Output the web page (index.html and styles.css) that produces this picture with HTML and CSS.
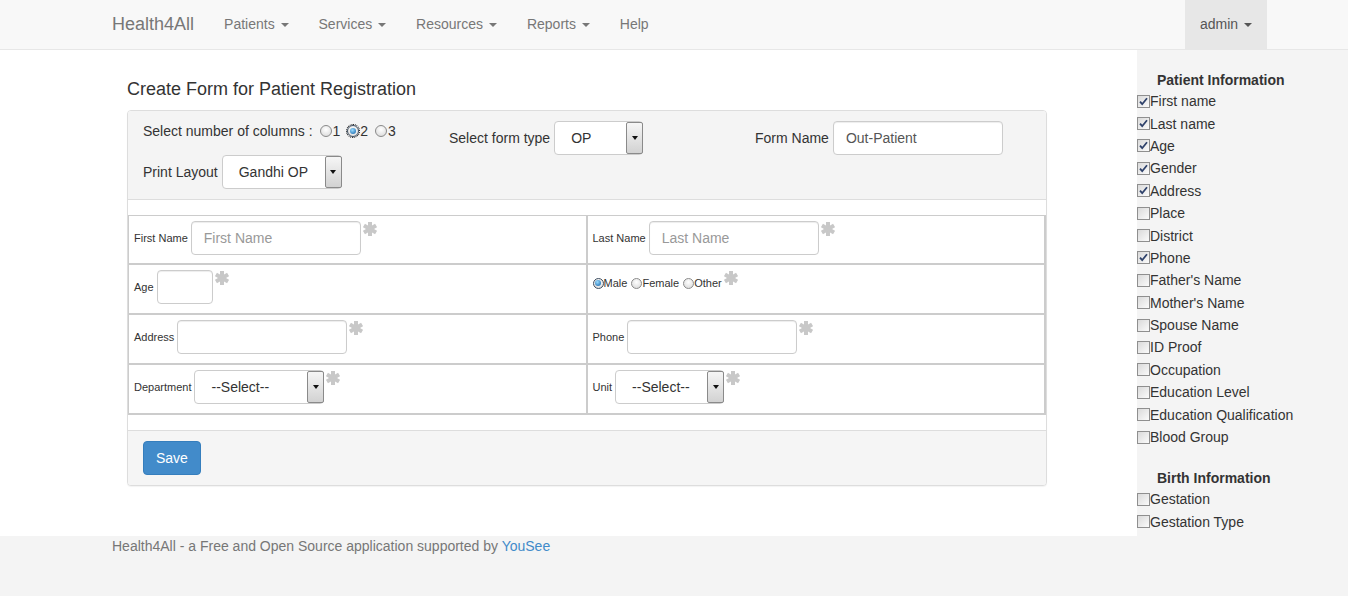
FILE: index.html
```html
<!DOCTYPE html>
<html>
<head>
<meta charset="utf-8">
<title>Health4All</title>
<link rel="stylesheet" href="styles.css">
</head>
<body>
<nav class="navbar">
  <a class="brand" href="#">Health4All</a>
  <ul class="nav">
    <li><a href="#">Patients <span class="caret"></span></a></li>
    <li><a href="#">Services <span class="caret"></span></a></li>
    <li><a href="#">Resources <span class="caret"></span></a></li>
    <li><a href="#">Reports <span class="caret"></span></a></li>
    <li><a href="#">Help</a></li>
  </ul>
  <ul class="nav nav-right">
    <li class="open"><a href="#">admin <span class="caret"></span></a></li>
  </ul>
</nav>

<div class="page">
  <main class="main">
    <h3 class="title">Create Form for Patient Registration</h3>
    <div class="panel">
      <div class="panel-heading">
        <div class="col">
          <div class="cols-line">Select number of columns : <span class="rd"></span>1 <span class="rd on focus"></span>2 <span class="rd"></span>3</div>
          <div class="field">
            <label>Print Layout</label>
            <div class="select w-layout"><span class="select-text">Gandhi OP</span><span class="select-arrow"></span></div>
          </div>
        </div>
        <div class="col">
          <div class="field">
            <label>Select form type</label>
            <div class="select w-type"><span class="select-text">OP</span><span class="select-arrow"></span></div>
          </div>
        </div>
        <div class="col">
          <div class="field">
            <label>Form Name</label>
            <input class="form-control w-170" type="text" value="Out-Patient">
          </div>
        </div>
      </div>

      <div class="panel-body">
        <table class="form-table">
          <tr>
            <td><div class="cell"><label>First Name</label><input class="form-control w-170" type="text" placeholder="First Name"><svg class="star" viewBox="0 0 14 14"><g fill="#c8c8c8"><rect x="5" y="0" width="4" height="14"/><rect x="5" y="0" width="4" height="14" transform="rotate(60 7 7)"/><rect x="5" y="0" width="4" height="14" transform="rotate(120 7 7)"/></g></svg></div></td>
            <td><div class="cell"><label>Last Name</label><input class="form-control w-170" type="text" placeholder="Last Name"><svg class="star" viewBox="0 0 14 14"><g fill="#c8c8c8"><rect x="5" y="0" width="4" height="14"/><rect x="5" y="0" width="4" height="14" transform="rotate(60 7 7)"/><rect x="5" y="0" width="4" height="14" transform="rotate(120 7 7)"/></g></svg></div></td>
          </tr>
          <tr>
            <td><div class="cell"><label>Age</label><input class="form-control w-56" type="text"><svg class="star" viewBox="0 0 14 14"><g fill="#c8c8c8"><rect x="5" y="0" width="4" height="14"/><rect x="5" y="0" width="4" height="14" transform="rotate(60 7 7)"/><rect x="5" y="0" width="4" height="14" transform="rotate(120 7 7)"/></g></svg></div></td>
            <td><div class="cell"><div class="radios"><span class="rd sm on"></span>Male <span class="rd sm"></span>Female <span class="rd sm"></span>Other</div><svg class="star" viewBox="0 0 14 14"><g fill="#c8c8c8"><rect x="5" y="0" width="4" height="14"/><rect x="5" y="0" width="4" height="14" transform="rotate(60 7 7)"/><rect x="5" y="0" width="4" height="14" transform="rotate(120 7 7)"/></g></svg></div></td>
          </tr>
          <tr>
            <td><div class="cell"><label>Address</label><input class="form-control w-170" type="text"><svg class="star" viewBox="0 0 14 14"><g fill="#c8c8c8"><rect x="5" y="0" width="4" height="14"/><rect x="5" y="0" width="4" height="14" transform="rotate(60 7 7)"/><rect x="5" y="0" width="4" height="14" transform="rotate(120 7 7)"/></g></svg></div></td>
            <td><div class="cell"><label>Phone</label><input class="form-control w-170" type="text"><svg class="star" viewBox="0 0 14 14"><g fill="#c8c8c8"><rect x="5" y="0" width="4" height="14"/><rect x="5" y="0" width="4" height="14" transform="rotate(60 7 7)"/><rect x="5" y="0" width="4" height="14" transform="rotate(120 7 7)"/></g></svg></div></td>
          </tr>
          <tr>
            <td><div class="cell"><label>Department</label><div class="select w-dept"><span class="select-text">--Select--</span><span class="select-arrow"></span></div><svg class="star" viewBox="0 0 14 14"><g fill="#c8c8c8"><rect x="5" y="0" width="4" height="14"/><rect x="5" y="0" width="4" height="14" transform="rotate(60 7 7)"/><rect x="5" y="0" width="4" height="14" transform="rotate(120 7 7)"/></g></svg></div></td>
            <td><div class="cell"><label>Unit</label><div class="select w-unit"><span class="select-text">--Select--</span><span class="select-arrow"></span></div><svg class="star" viewBox="0 0 14 14"><g fill="#c8c8c8"><rect x="5" y="0" width="4" height="14"/><rect x="5" y="0" width="4" height="14" transform="rotate(60 7 7)"/><rect x="5" y="0" width="4" height="14" transform="rotate(120 7 7)"/></g></svg></div></td>
          </tr>
        </table>
      </div>

      <div class="panel-footer">
        <button class="btn" type="button">Save</button>
      </div>
    </div>
  </main>

  <aside class="sidebar">
    <h4>Patient Information</h4>
    <div class="check-item"><span class="cb on"><svg viewBox="0 0 11 11"><path d="M2 5.6 L4.2 8.2 L9 2.2"/></svg></span>First name</div>
    <div class="check-item"><span class="cb on"><svg viewBox="0 0 11 11"><path d="M2 5.6 L4.2 8.2 L9 2.2"/></svg></span>Last name</div>
    <div class="check-item"><span class="cb on"><svg viewBox="0 0 11 11"><path d="M2 5.6 L4.2 8.2 L9 2.2"/></svg></span>Age</div>
    <div class="check-item"><span class="cb on"><svg viewBox="0 0 11 11"><path d="M2 5.6 L4.2 8.2 L9 2.2"/></svg></span>Gender</div>
    <div class="check-item"><span class="cb on"><svg viewBox="0 0 11 11"><path d="M2 5.6 L4.2 8.2 L9 2.2"/></svg></span>Address</div>
    <div class="check-item"><span class="cb"></span>Place</div>
    <div class="check-item"><span class="cb"></span>District</div>
    <div class="check-item"><span class="cb on"><svg viewBox="0 0 11 11"><path d="M2 5.6 L4.2 8.2 L9 2.2"/></svg></span>Phone</div>
    <div class="check-item"><span class="cb"></span>Father's Name</div>
    <div class="check-item"><span class="cb"></span>Mother's Name</div>
    <div class="check-item"><span class="cb"></span>Spouse Name</div>
    <div class="check-item"><span class="cb"></span>ID Proof</div>
    <div class="check-item"><span class="cb"></span>Occupation</div>
    <div class="check-item"><span class="cb"></span>Education Level</div>
    <div class="check-item"><span class="cb"></span>Education Qualification</div>
    <div class="check-item"><span class="cb"></span>Blood Group</div>
    <h4>Birth Information</h4>
    <div class="check-item"><span class="cb"></span>Gestation</div>
    <div class="check-item"><span class="cb"></span>Gestation Type</div>
  </aside>
</div>

<footer class="footer">Health4All - a Free and Open Source application supported by <a href="#">YouSee</a></footer>
</body>
</html>
```

FILE: styles.css
```css
* { box-sizing: border-box; }

body {
  margin: 0;
  font-family: "Liberation Sans", Arial, sans-serif;
  font-size: 14px;
  line-height: 20px;
  color: #333;
  background: #f4f4f4;
}

/* Navbar */
.navbar {
  display: flex;
  height: 50px;
  background: #f8f8f8;
  border-bottom: 1px solid #e7e7e7;
  padding-left: 97px;
}
.brand {
  padding: 14px 15px 15px;
  font-size: 18px;
  line-height: 20px;
  color: #777;
  text-decoration: none;
}
.nav {
  display: flex;
  list-style: none;
  margin: 0;
  padding: 0;
}
.nav a {
  display: block;
  padding: 14px 15px 15px;
  line-height: 20px;
  color: #777;
  text-decoration: none;
}
.nav-right { margin-left: auto; margin-right: 81px; }
.nav-right .open a { background: #e7e7e7; color: #555; }
.caret {
  display: inline-block;
  width: 0;
  height: 0;
  margin-left: 2px;
  vertical-align: middle;
  border-top: 4px solid;
  border-left: 4px solid transparent;
  border-right: 4px solid transparent;
}

/* Layout */
.page { display: flex; }
.main {
  width: 1137px;
  background: #fff;
  padding: 29px 0 0 127px;
}
.title {
  margin: 0 0 11px;
  font-size: 18px;
  line-height: 20px;
  font-weight: normal;
  color: #333;
}

/* Panel */
.panel {
  width: 920px;
  border: 1px solid #ddd;
  border-radius: 4px;
  background: #fff;
  box-shadow: 0 1px 1px rgba(0, 0, 0, .05);
}
.panel-heading {
  display: flex;
  background: #f4f4f4;
  border-bottom: 1px solid #ddd;
  border-radius: 3px 3px 0 0;
  padding: 10px 0;
}
.col { width: 306px; padding: 0 15px; }
.cols-line {
  height: 20px;
  margin-bottom: 14px;
  white-space: nowrap;
}
.field { display: flex; align-items: center; }
.field label { margin-right: 4px; white-space: nowrap; }

.form-control {
  height: 34px;
  padding: 6px 12px;
  border: 1px solid #ccc;
  border-radius: 4px;
  background: #fff;
  font-family: inherit;
  font-size: 14px;
  line-height: 20px;
  color: #555;
  box-shadow: inset 0 1px 1px rgba(0, 0, 0, .075);
}
.form-control::placeholder { color: #999; }
.w-170 { width: 170px; }
.w-56 { width: 56px; }

.select {
  display: flex;
  align-items: center;
  height: 34px;
  border: 1px solid #ccc;
  border-radius: 4px;
  background: #fff;
  font-size: 14px;
  color: #333;
}
.w-layout { width: 120px; }
.w-type { width: 89px; }
.w-dept { width: 130px; }
.w-unit { width: 109px; }
.select-text { flex: 1; padding-left: 16px; white-space: nowrap; }
.select-arrow {
  align-self: stretch;
  width: 17px;
  margin-right: -1px;
  border: 1px solid #8a8a8a;
  border-radius: 2px;
  background: linear-gradient(#f6f6f6, #d2d2d2);
  display: flex;
  align-items: center;
  justify-content: center;
}
.select-arrow::after {
  content: "";
  border-top: 4px solid #111;
  border-left: 3.5px solid transparent;
  border-right: 3.5px solid transparent;
}

/* Radios */
.rd {
  display: inline-block;
  position: relative;
  width: 12px;
  height: 12px;
  margin: 0 1px 0 3px;
  vertical-align: -1px;
  border: 1px solid #8a8a8a;
  border-radius: 50%;
  background: radial-gradient(circle at 50% 35%, #ffffff, #d6d6d6);
}
.rd.on { border-color: #3d4d60; }
.rd.on::after {
  content: "";
  position: absolute;
  left: 2px;
  top: 2px;
  width: 6px;
  height: 6px;
  border-radius: 50%;
  background: radial-gradient(circle at 40% 35%, #9bdcff, #0a5da6);
}
.rd.focus { outline: 1px dotted #000; outline-offset: 0; }
.rd.sm { width: 11px; height: 11px; margin: 0 0 0 1px; }
.rd.sm:first-child { margin-left: 0; }
.rd.sm.on::after { left: 1.5px; top: 1.5px; }

/* Table */
.panel-body { padding: 15px 0; }
.form-table {
  width: 100%;
  table-layout: fixed;
  border-collapse: separate;
  border-spacing: 0;
  border-left: 1px solid #ccc;
  border-top: 1px solid #ccc;
}
.form-table td {
  width: 50%;
  padding: 0;
  vertical-align: top;
  border-right: 2px solid #ccc;
  border-bottom: 2px solid #ccc;
}
.cell {
  display: flex;
  align-items: flex-start;
  height: 48px;
  padding: 5px;
  font-size: 11px;
  color: #333;
}
.form-table tr:first-child .cell { height: 47px; }
.cell label { line-height: 34px; margin-right: 3px; white-space: nowrap; }
.radios {
  display: flex;
  align-items: center;
  height: 26px;
  white-space: pre;
}
.star {
  width: 14px;
  height: 14px;
  margin: 1px 0 0 2px;
  flex: none;
}

/* Panel footer */
.panel-footer {
  padding: 10px 15px;
  background: #f5f5f5;
  border-top: 1px solid #ddd;
  border-radius: 0 0 3px 3px;
}
.btn {
  height: 34px;
  padding: 6px 12px;
  font-family: inherit;
  font-size: 14px;
  line-height: 20px;
  color: #fff;
  background: #428bca;
  border: 1px solid #357ebd;
  border-radius: 4px;
}

/* Sidebar */
.sidebar {
  width: 211px;
  background: #f4f4f4;
  padding-bottom: 3px;
}
.sidebar h4 {
  margin: 20px 0 0;
  padding-left: 20px;
  font-size: 14px;
  line-height: 20px;
  font-weight: bold;
  color: #333;
}
.check-item {
  display: flex;
  align-items: center;
  height: 22.4px;
  white-space: nowrap;
}
.cb {
  display: flex;
  align-items: center;
  justify-content: center;
  width: 13px;
  height: 13px;
  border: 1px solid #8f8f8f;
  background: linear-gradient(135deg, #dadada, #fbfbfb);
  flex: none;
}
.cb svg { width: 11px; height: 11px; }
.cb path { fill: none; stroke: #2f426b; stroke-width: 1.8; }

/* Footer */
.footer {
  height: 60px;
  padding-left: 112px;
  color: #777;
  background: #f4f4f4;
}
.footer a { color: #428bca; text-decoration: none; }
```
